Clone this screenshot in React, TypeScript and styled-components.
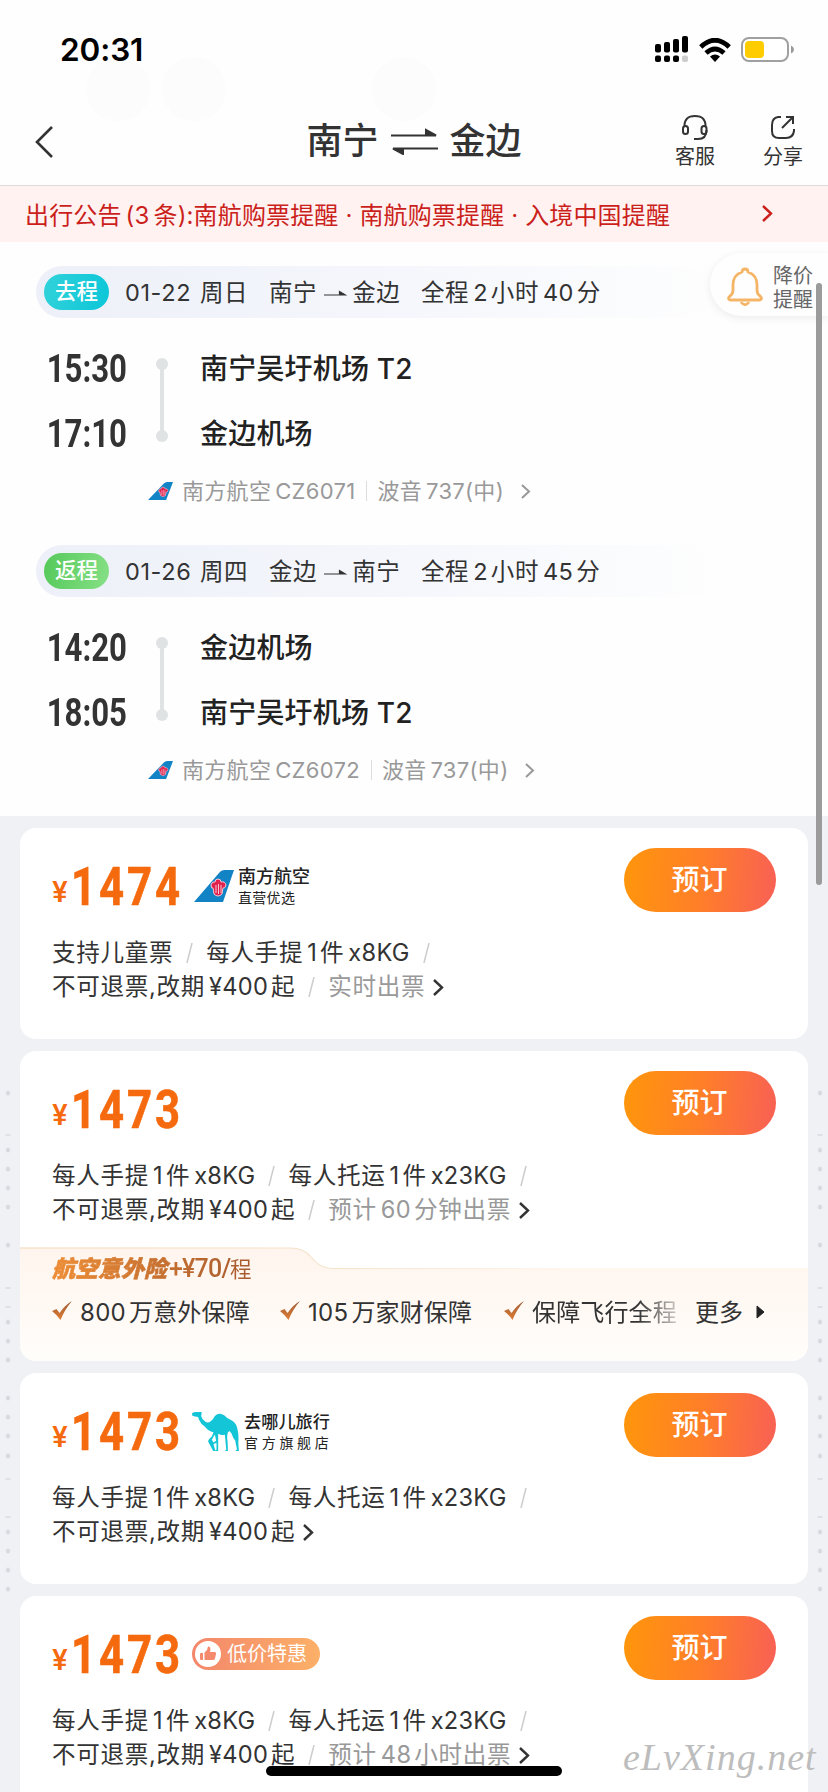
import React from 'react';
import styled, { createGlobalStyle } from 'styled-components';

const GlobalStyle = createGlobalStyle`
  * { box-sizing: border-box; }
  html, body { margin: 0; padding: 0; background: #eff1f5; }
  body { font-family: Inter, "Noto Sans CJK SC", sans-serif; color: #333; overflow: hidden; }
`;

const Screen = styled.div`
  position: relative;
  width: 828px;
  height: 1792px;
  overflow: hidden;
  display: flex;
  flex-direction: column;
  background: #eff1f5;
`;

/* ---------- text helpers ---------- */

const Latin = styled.span<{ $before: number; $after: number }>`
  margin: 0 ${p => p.$after}px 0 ${p => p.$before}px;
  letter-spacing: 0.3px;
`;

/* Adds a thin gap between Chinese characters and embedded Latin runs. */
function Mixed({ text, gap = 4 }: { text: string; gap?: number }) {
  const parts = text.match(/[A-Za-z0-9¥]+|[^A-Za-z0-9¥]+/g) || [];
  return (
    <span>
      {parts.map((p, i) =>
        /^[A-Za-z0-9¥]/.test(p) ? (
          <Latin key={i} $before={i === 0 ? 0 : gap} $after={i === parts.length - 1 || parts[i + 1][0] === '(' ? 0 : gap - 1}>{p}</Latin>
        ) : (
          <React.Fragment key={i}>{p}</React.Fragment>
        )
      )}
    </span>
  );
}

/* ---------- header ---------- */

const Header = styled.header`
  position: relative;
  height: 186px;
  background: #fefefe;
  border-bottom: 1px solid #e0dcdb;
`;

const Haze = styled.i<{ $x: number }>`
  position: absolute;
  left: ${p => p.$x}px;
  top: 57px;
  width: 64px;
  height: 64px;
  border-radius: 50%;
  background: #fcfcfc;
`;

const StatusBar = styled.div`
  position: relative;
  height: 99px;
  padding: 0 34px 0 60px;
  display: flex;
  align-items: center;
  justify-content: space-between;
`;

const Clock = styled.div`
  font-size: 31.5px;
  font-weight: 600;
  line-height: 40px;
  color: #000;
  letter-spacing: -0.1px;
`;

const StatusIcons = styled.div`
  display: flex;
  align-items: center;
  gap: 10px;
`;

const NavBar = styled.div`
  position: relative;
  height: 86px;
  display: grid;
  grid-template-columns: 1fr auto 1fr;
  align-items: center;
  padding: 0 26px;
`;

const BackIcon = styled.svg`
  margin-left: 9px;
`;

const RouteTitle = styled.h1`
  margin: 0 0 2px;
  display: flex;
  align-items: center;
  justify-content: center;
  gap: 12px;
  font-size: 36px;
  font-weight: 500;
  line-height: 48px;
  white-space: nowrap;
`;

const NavActions = styled.div`
  margin-right: -1px;
  display: flex;
  justify-content: flex-end;
  gap: 48px;
`;

const NavAction = styled.div`
  display: flex;
  flex-direction: column;
  align-items: center;
  gap: 5px;
  font-size: 20px;
  line-height: 24px;
  svg { display: block; }
`;

const Notice = styled.div`
  height: 56px;
  flex: none;
  display: flex;
  align-items: center;
  justify-content: space-between;
  padding: 0 55px 2px 25px;
  background: #fff2f0;
  color: #cb1f1c;
  font-size: 24px;
  letter-spacing: 0.15px;
`;

const Count = styled.span`
  margin: 0 4px 0 4px;
`;

/* ---------- itinerary ---------- */

const Itinerary = styled.section`
  position: relative;
  flex: none;
  height: 574px;
  padding-top: 24px;
  display: flex;
  flex-direction: column;
  gap: 29px;
  background: #fefefe;
`;

const Trip = styled.article`
  height: 250px;
`;

const TripHead = styled.div`
  margin: 0 36px;
  height: 52px;
  padding-left: 8px;
  border-radius: 26px 0 0 26px;
  background: linear-gradient(90deg, #edf0f8 0%, #f5f7fc 50%, #fefefe 92%);
  display: flex;
  align-items: center;
  font-size: 23.5px;
  line-height: 30px;
  white-space: nowrap;
`;

const TripBadge = styled.span<{ $from: string; $to: string }>`
  width: 65px;
  height: 36px;
  border-radius: 18px;
  margin-right: 16px;
  background: linear-gradient(100deg, ${p => p.$from}, ${p => p.$to});
  color: #fff;
  font-size: 21.5px;
  font-weight: 500;
  line-height: 35px;
  text-align: center;
`;

const TripPart = styled.span<{ $w: number }>`
  width: ${p => p.$w}px;
  flex: none;
  padding-top: 2px;
  display: flex;
  align-items: center;
  gap: 5.5px;
  letter-spacing: 0.6px;
`;

const Legs = styled.div`
  margin-top: 18px;
  height: 130px;
  display: grid;
  grid-template-columns: 127px 70px 1fr;
  grid-template-rows: 65px 65px;
  align-items: center;
`;

const LegTime = styled.div`
  display: flex;
  justify-content: flex-end;
  height: 44px;
  white-space: nowrap;
  > span {
    font-family: Roboto, sans-serif;
    font-size: 38px;
    line-height: 44px;
    font-weight: 700;
    transform: scaleX(0.82);
    transform-origin: right;
  }
`;

const Timeline = styled.div`
  grid-column: 2;
  grid-row: 1 / 3;
  justify-self: center;
  width: 12px;
  height: 84px;
  margin-top: -2px;
  display: flex;
  flex-direction: column;
  align-items: center;
  &::before, &::after {
    content: '';
    width: 12px;
    height: 12px;
    border-radius: 50%;
    background: #dfe3e4;
  }
  > i { flex: 1; width: 4px; background: #dfe3e4; margin: -1px 0; }
`;

const Airport = styled.div`
  padding-left: 3px;
  grid-column: 3;
  font-size: 28px;
  font-weight: 500;
  line-height: 40px;
  letter-spacing: 0.2px;
  color: #222;
`;

const Carrier = styled.div`
  height: 50px;
  padding-left: 148px;
  display: flex;
  align-items: center;
  color: #999;
  font-size: 22px;
  line-height: 30px;
  letter-spacing: 0.3px;
  > svg:first-child { margin-right: 9px; }
`;

const Divider = styled.i`
  width: 1px;
  height: 20px;
  margin: 0 10px 0 11px;
  background: #dcdcdc;
`;

const PriceAlert = styled.div`
  position: absolute;
  right: 0;
  top: 11px;
  width: 118px;
  height: 63px;
  padding-left: 17px;
  border-radius: 32px 0 0 32px;
  background: #fefefe;
  box-shadow: 0 2px 8px rgba(0, 0, 0, 0.08);
  display: flex;
  align-items: center;
  gap: 10px;
  font-size: 20px;
  line-height: 24px;
  color: #666;
  svg { margin-top: 4px; }
  div { margin-top: 7px; }
`;

const ScrollThumb = styled.div`
  position: absolute;
  left: 816px;
  top: 283px;
  width: 6px;
  height: 602px;
  border-radius: 3px;
  background: #9b9b9b;
`;

/* ---------- offers ---------- */

const OfferList = styled.main`
  position: relative;
  flex: none;
  padding: 12px 20px 0;
  display: flex;
  flex-direction: column;
  gap: 12px;
`;

const SideMarks = styled.svg<{ $x: number }>`
  position: absolute;
  left: ${p => p.$x}px;
  top: 0;
`;

const OfferCard = styled.article`
  position: relative;
  min-height: 211px;
  border-radius: 16px;
  background: #fff;
  overflow: hidden;
`;

const OfferHead = styled.div`
  padding: 20px 32px 0 33px;
  display: flex;
  justify-content: space-between;
`;

const PriceGroup = styled.div`
  display: flex;
  align-items: center;
  height: 64px;
  padding-top: 12px;
`;

const Price = styled.div`
  width: 139px;
  height: 52px;
  display: flex;
  align-items: baseline;
  color: #f56a0e;
`;

const Yen = styled.span`
  width: 21px;
  margin-left: -1px;
  font-size: 28px;
  font-weight: 600;
  transform: translateY(-3px);
`;

const Amount = styled.span`
  margin-left: 3px;
  font-family: Roboto, sans-serif;
  font-size: 54px;
  line-height: 53px;
  font-weight: 700;
  letter-spacing: 3.6px;
  -webkit-text-stroke: 0.6px #f56a0e;
  transform: scaleX(0.81);
  transform-origin: left;
`;

const BookButton = styled.button`
  width: 152px;
  height: 64px;
  padding: 0;
  border: 0;
  border-radius: 32px;
  background: linear-gradient(95deg, #ff960b, #ff7f28 50%, #f86055);
  color: #fff;
  font: 500 28px/40px Inter, "Noto Sans CJK SC", sans-serif;
  text-indent: -1px;
`;

const Rules = styled.div`
  padding: 24px 0 0 32px;
  font-size: 23.6px;
  letter-spacing: 0.65px;
  color: #333;
`;

const RuleLine = styled.div`
  height: 34px;
  line-height: 34px;
  display: flex;
  align-items: center;
  white-space: nowrap;
`;

const Slash = styled.svg`
  margin: 0 13px 0 13px;
`;

const Muted = styled.span`
  color: #999;
`;

const Brand = styled.div<{ $gap: number; $shift?: number }>`
  margin-left: ${p => p.$shift || 0}px;
  display: flex;
  align-items: center;
  gap: ${p => p.$gap}px;
  color: #222;
`;

const BrandText = styled.div`
  display: flex;
  flex-direction: column;
  white-space: nowrap;
`;

const BrandName = styled.b<{ $size: number }>`
  font-size: ${p => p.$size}px;
  line-height: 22px;
  font-weight: 500;
`;

const BrandSub = styled.span<{ $track: number }>`
  font-size: 14px;
  line-height: 19px;
  letter-spacing: ${p => p.$track}px;
`;

const DealTag = styled.div`
  height: 32px;
  width: 128px;
  padding-left: 3px;
  border-radius: 16px;
  display: flex;
  align-items: center;
  gap: 6px;
  background: linear-gradient(90deg, #f3876b, #fcb068);
  color: #fff;
  font-size: 20px;
  line-height: 30px;
  white-space: nowrap;
`;

const Insurance = styled.div`
  position: relative;
  margin-top: 20px;
  height: 114px;
  padding: 9px 0 0 32px;
`;

const InsuranceShape = styled.svg`
  position: absolute;
  left: 0;
  top: 0;
`;

const InsuranceTitle = styled.div`
  position: relative;
  display: flex;
  width: 206px;
  align-items: center;
  height: 26px;
  color: transparent;
  background: linear-gradient(90deg, #ee8d35, #a4582e);
  background-clip: text;
  -webkit-background-clip: text;
  font-size: 21.5px;
  line-height: 26px;
  white-space: nowrap;
  b { font-size: 23px; font-weight: 900; font-style: italic; -webkit-text-stroke: 0.6px transparent; }
`;

const Cond = styled.span`
  width: 61px;
  margin-left: 2px;
  font-family: Roboto, sans-serif;
  font-size: 25px;
  font-weight: 500;
  letter-spacing: -0.8px;
`;

const Benefits = styled.div`
  position: relative;
  display: flex;
  align-items: center;
  height: 30px;
  margin-top: 13px;
  font-size: 24px;
  white-space: nowrap;
`;

const Benefit = styled.span<{ $w: number; $fade?: boolean }>`
  width: ${p => p.$w}px;
  flex: none;
  display: flex;
  align-items: center;
  gap: 8px;
  letter-spacing: 0.15px;
  ${p => p.$fade && 'mask-image: linear-gradient(90deg, #000 70%, rgba(0,0,0,.2) 92%);'}
`;

const MoreIcon = styled.svg`
  margin: 3px 0 0 13px;
`;

const HomeBar = styled.div`
  position: absolute;
  left: 266px;
  top: 1766px;
  width: 296px;
  height: 10px;
  border-radius: 5px;
  background: #000;
`;

const Watermark = styled.div`
  position: absolute;
  left: 623px;
  top: 1735px;
  font: italic 400 38px/44px "Liberation Serif", serif;
  letter-spacing: 1px;
  color: #bdbdbd;
`;

/* ---------- drawings ---------- */

const ChevronSvg = styled.svg<{ $left: number }>`
  margin-left: ${p => p.$left}px;
`;

const Chevron = ({ w, h, color, stroke = 2, left = 0 }: { w: number; h: number; color: string; stroke?: number; left?: number }) => (
  <ChevronSvg $left={left} width={w + 4} height={h + 4} viewBox={`-2 -2 ${w + 4} ${h + 4}`}>
    <path d={`M0 0L${w} ${h / 2}L0 ${h}`} fill="none" stroke={color} strokeWidth={stroke} />
  </ChevronSvg>
);

const Tail = ({ w, h }: { w: number; h: number }) => (
  <svg width={w} height={h} viewBox="0 0 40 32" preserveAspectRatio="none">
    <path d="M0 32L25 3Q27 0 31 0H40L29 32Z" fill="#1283c5" />
    <path d="M17 15q1-4 4-3 0-3 3-3 3 0 3 3 4-1 5 3-1 4-3 3l-1 6q-4 4-8 0l-1-6q-2 1-2-3z" fill="#e2224e" stroke="#f5c8d6" strokeWidth="1" />
    <path d="M22 15v8M24.500 14v10M27 15v8" stroke="#fbdbe4" strokeWidth="0.900" fill="none" />
  </svg>
);

const Camel = () => (
  <svg width="47" height="39" viewBox="20 36 140 115" preserveAspectRatio="none">
    <path
      d="M20 40Q26 35 35 36L48 36Q50 43 47 47Q50 59 60 65Q68 69 76 63Q84 57 88 48Q95 40 105 41Q117 43 125 54L140 62Q152 69 155 85Q160 103 158 125Q158 138 160 151H149L154 146Q150 130 149 121Q142 113 138 100L132 92L127 96Q123 106 126 124L127 151H117L122 147L118 103Q106 105 98 100L98 151H88L93 147V127L84 131L90 151H83L68 123Q68 117 79 108L84 96Q68 92 58 79Q47 73 41 59L38 51Q28 50 21 47Z"
      fill="#13c5d6"
    />
    <path d="M88 102L79 118L84 126L92 121Z" fill="#fff" />
  </svg>
);

const Check = () => (
  <svg width="20" height="19" viewBox="0 0 20 19">
    <defs>
      <linearGradient id="ck" x1="0" y1="0" x2="0" y2="1">
        <stop offset="0" stopColor="#9d5c37" />
        <stop offset="1" stopColor="#e07e35" />
      </linearGradient>
    </defs>
    <path d="M0 10L4.500 8L7.500 12Q13 4 20 0Q13 8 8.500 19Q5 14 0 10Z" fill="url(#ck)" />
  </svg>
);

const Arrow = () => (
  <svg width="24" height="8" viewBox="0 0 24 8">
    <path d="M1 6H22.500L16.500 2.500V6" fill="#333" stroke="#333" strokeWidth="1.200" />
  </svg>
);

const Signal = () => (
  <svg width="34" height="27" viewBox="0 0 34 27">
    {[8, 6, 3, 0].map((top, i) => (
      <React.Fragment key={i}>
        <rect x={i * 9} y={top} width="6" height={16.5 - top} rx="2" fill="#000" />
        <rect x={i * 9} y="19.500" width="6" height="6.500" rx="2" fill={i === 3 ? '#ccc' : '#000'} />
      </React.Fragment>
    ))}
  </svg>
);

const Wifi = () => (
  <svg width="32" height="24" viewBox="0 0 32 24">
    <g fill="none" stroke="#000" strokeWidth="4.800">
      <path d="M1.800 9Q16-4.500 30.200 9" />
      <path d="M7 15Q16 7 25 15" />
    </g>
    <path d="M11 18.500Q16 14.500 21 18.500L16 24Z" />
  </svg>
);

const Battery = () => (
  <svg width="53" height="25" viewBox="0 0 53 25">
    <rect x="1" y="1" width="46" height="23" rx="7" fill="#fff" stroke="#a0a0a0" strokeWidth="2" />
    <rect x="4" y="4" width="19" height="17" rx="4" fill="#fc0" />
    <path d="M50 8.500Q53 10 53 12.500T50 16.500Z" fill="#999" />
  </svg>
);

const STARS = [277, 334, 353, 372, 391, 429, 506, 525, 544, 582, 601, 620, 640, 716, 735, 754, 773];
const DASHES = [319, 472, 491, 663, 701];

const Marks = ({ x }: { x: number }) => (
  <SideMarks $x={x} width="8" height="900" aria-hidden>
    <g stroke="#d3d6dc" strokeWidth="1.200">
      {STARS.map(y => (
        <path key={y} d={`M1.500 ${y}h5M2.700 ${y - 2.2}l2.600 4.400M5.300 ${y - 2.2}l-2.600 4.400`} />
      ))}
      {DASHES.map(y => (
        <path key={y} d={`M1.500 ${y}h5`} />
      ))}
    </g>
  </SideMarks>
);

const RuleSlash = () => (
  <Slash width="7" height="20" viewBox="0 0 7 20">
    <path d="M1 20L6 0" stroke="#ccc" strokeWidth="1.500" />
  </Slash>
);

/* ---------- blocks ---------- */

interface TripData {
  label: string; from: string; to: string; date: string; day: string;
  a: string; b: string; length: string; dep: string; arr: string;
  depPort: string; arrPort: string; flight: string;
}

const TRIPS: TripData[] = [
  { label: '去程', from: '#31d2da', to: '#0cc6d8', date: '01-22', day: '周日', a: '南宁', b: '金边', length: '全程2小时40分', dep: '15:30', arr: '17:10', depPort: '南宁吴圩机场 T2', arrPort: '金边机场', flight: '南方航空CZ6071' },
  { label: '返程', from: '#55c95a', to: '#86e086', date: '01-26', day: '周四', a: '金边', b: '南宁', length: '全程2小时45分', dep: '14:20', arr: '18:05', depPort: '金边机场', arrPort: '南宁吴圩机场 T2', flight: '南方航空CZ6072' },
];

function TripBlock({ t }: { t: TripData }) {
  return (
    <Trip>
      <TripHead>
        <TripBadge $from={t.from} $to={t.to}>{t.label}</TripBadge>
        <TripPart $w={75}>{t.date}</TripPart>
        <TripPart $w={69}>{t.day}</TripPart>
        <TripPart $w={152}>{t.a}<Arrow />{t.b}</TripPart>
        <TripPart $w={190}><Mixed text={t.length} /></TripPart>
      </TripHead>
      <Legs>
        <LegTime><span>{t.dep}</span></LegTime>
        <Timeline><i /></Timeline>
        <Airport>{t.depPort}</Airport>
        <LegTime><span>{t.arr}</span></LegTime>
        <Airport>{t.arrPort}</Airport>
      </Legs>
      <Carrier>
        <Tail w={25} h={18} />
        <Mixed text={t.flight} />
        <Divider />
        <Mixed text="波音737(中)" />
        <Chevron w={7} h={13} color="#999" left={16} />
      </Carrier>
    </Trip>
  );
}

function Offer({ amount, brand, first, second, status, children }: {
  amount: string; brand?: React.ReactNode; first: string; second: string; status?: string; children?: React.ReactNode;
}) {
  return (
    <OfferCard>
      <OfferHead>
        <PriceGroup>
          <Price><Yen>¥</Yen><Amount>{amount}</Amount></Price>
          {brand}
        </PriceGroup>
        <BookButton>预订</BookButton>
      </OfferHead>
      <Rules>
        <RuleLine>
          <Mixed text={first} /><RuleSlash /><Mixed text={second} /><RuleSlash />
        </RuleLine>
        <RuleLine>
          <Mixed text="不可退票,改期¥400起" />
          {status && <><RuleSlash /><Muted><Mixed text={status} /></Muted></>}
          <Chevron w={8} h={15} color="#333" stroke={2.4} left={7} />
        </RuleLine>
      </Rules>
      {children}
    </OfferCard>
  );
}

export default function App() {
  return (
    <Screen>
      <GlobalStyle />
      <Header>
        <Haze $x={86} /><Haze $x={162} /><Haze $x={372} />
        <StatusBar>
          <Clock>20:31</Clock>
          <StatusIcons><Signal /><Wifi /><Battery /></StatusIcons>
        </StatusBar>
        <NavBar>
          <BackIcon width="18" height="32" viewBox="0 0 18 32">
            <path d="M17 1L2 16L17 31" fill="none" stroke="#333" strokeWidth="2.600" />
          </BackIcon>
          <RouteTitle>
            南宁
            <svg width="47" height="27" viewBox="0 0 47 27">
              <path d="M0 7.500H45L35 2V7M47 20.500H2L12 26V21" fill="#333" stroke="#333" strokeWidth="2" />
            </svg>
            金边
          </RouteTitle>
          <NavActions>
            <NavAction>
              <svg width="26" height="25" viewBox="0 0 26 25" fill="none" stroke="#333" strokeWidth="2">
                <path d="M2.500 12Q2 1 13 1T23.500 12M24.500 15Q24.500 24 16 24H12" />
                <rect x="1" y="11" width="5" height="8" rx="2.500" />
                <rect x="19.500" y="11" width="5" height="8" rx="2.500" />
              </svg>
              客服
            </NavAction>
            <NavAction>
              <svg width="24" height="25" viewBox="0 0 24 25" fill="none" stroke="#333" strokeWidth="2">
                <path d="M10 2H7Q1 3 1 10V16Q1 23 8 23H15Q22 23 23 16V14M11 13L22 2M15 2H22V9" />
              </svg>
              分享
            </NavAction>
          </NavActions>
        </NavBar>
      </Header>
      <Notice>
        <span>出行公告<Count>(3</Count>条):南航购票提醒 · 南航购票提醒 · 入境中国提醒</span>
        <Chevron w={8} h={15} color="#cb1f1c" stroke={2.4} />
      </Notice>
      <Itinerary>
        {TRIPS.map(t => <TripBlock key={t.label} t={t} />)}
        <PriceAlert>
          <svg width="36" height="40" viewBox="0 0 36 40" fill="none" stroke="#f4b567" strokeWidth="2.800" strokeLinejoin="round">
            <path d="M15 5Q15 2 18 2T21 5Q30 8 30 18V23Q30 27 33 29Q36 32 33 33H3Q0 32 3 29Q6 27 6 23V18Q6 8 15 5Z" />
            <path d="M14 35Q18 40.500 22 35" />
          </svg>
          <div>降价<br />提醒</div>
        </PriceAlert>
      </Itinerary>
      <OfferList>
        <Marks x={4} />
        <Marks x={816} />
        <Offer
          amount="1474"
          brand={
            <Brand $gap={4} $shift={2}>
              <Tail w={40} h={32} />
              <BrandText>
                <BrandName $size={18}>南方航空</BrandName>
                <BrandSub $track={0.3}>直营优选</BrandSub>
              </BrandText>
            </Brand>
          }
          first="支持儿童票" second="每人手提1件x8KG" status="实时出票"
        />
        <Offer amount="1473" first="每人手提1件x8KG" second="每人托运1件x23KG" status="预计60分钟出票">
          <Insurance>
            <InsuranceShape width="788" height="114" viewBox="0 0 788 114">
              <defs>
                <linearGradient id="cream" x1="0" y1="0" x2="0" y2="1">
                  <stop offset="0" stopColor="#fff5ee" />
                  <stop offset="0.300" stopColor="#fff7f1" />
                  <stop offset="1" stopColor="#fffdfb" />
                </linearGradient>
                <linearGradient id="edge" x1="0" y1="0" x2="1" y2="0">
                  <stop offset="0" stopColor="#f3d7b4" />
                  <stop offset="0.400" stopColor="#f6e3cc" />
                  <stop offset="0.700" stopColor="#fff6ee" />
                </linearGradient>
              </defs>
              <path d="M0 1H270Q284 1 291 10Q300 21.500 312 21.500H788V114H0Z" fill="url(#cream)" />
              <path d="M0 1H270Q284 1 291 10Q300 21.500 312 21.500H788" fill="none" stroke="url(#edge)" strokeWidth="1.200" />
            </InsuranceShape>
            <InsuranceTitle><b>航空意外险</b><Cond>+¥70/</Cond>程</InsuranceTitle>
            <Benefits>
              <Benefit $w={228}><Check /><Mixed text="800万意外保障" /></Benefit>
              <Benefit $w={224}><Check /><Mixed text="105万家财保障" /></Benefit>
              <Benefit $w={191} $fade><Check /><span>保障飞行全程</span></Benefit>
              <span>更多</span>
              <MoreIcon width="9" height="14" viewBox="0 0 9 14">
                <path d="M1 1L8 7L1 13Z" fill="#222" stroke="#222" strokeLinejoin="round" />
              </MoreIcon>
            </Benefits>
          </Insurance>
        </Offer>
        <Offer
          amount="1473"
          brand={
            <Brand $gap={5}>
              <Camel />
              <BrandText>
                <BrandName $size={17.2}>去哪儿旅行</BrandName>
                <BrandSub $track={3.7}>官方旗舰店</BrandSub>
              </BrandText>
            </Brand>
          }
          first="每人手提1件x8KG" second="每人托运1件x23KG"
        />
        <Offer
          amount="1473"
          brand={
            <DealTag>
              <svg width="26" height="26" viewBox="0 0 26 26">
                <circle cx="13" cy="13" r="13" fill="#fff" />
                <path d="M6 12H8V19H6Q5 19 5 18V13Q5 12 6 12ZM9.500 11.500L12 9L13 5.500Q15.500 5 15.500 8L15 11H20Q21.500 11.500 21 13L20 17.500Q19.500 19 18 19H9.500Z" fill="#f4896b" />
              </svg>
              低价特惠
            </DealTag>
          }
          first="每人手提1件x8KG" second="每人托运1件x23KG" status="预计48小时出票"
        />
      </OfferList>
      <ScrollThumb />
      <HomeBar />
      <Watermark>eLvXing.net</Watermark>
    </Screen>
  );
}
